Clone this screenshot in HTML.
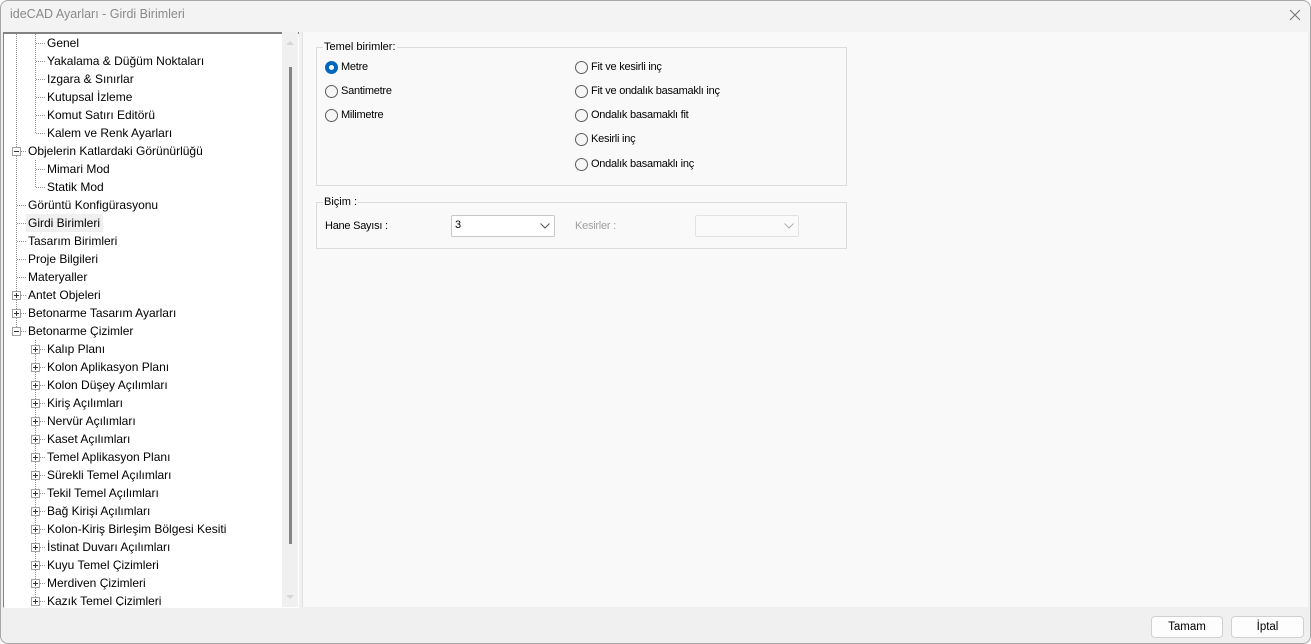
<!DOCTYPE html>
<html><head><meta charset="utf-8"><style>
*{box-sizing:border-box;margin:0;padding:0}
body{width:1311px;height:644px;background:#fff;font-family:"Liberation Sans",sans-serif;overflow:hidden;position:relative}
#win{position:absolute;left:0;top:0;width:1311px;height:644px;background:#f0f0f0;border-radius:8px;overflow:hidden}
#frame{position:absolute;left:0;top:0;width:1311px;height:644px;border:1px solid #a8a8a8;border-radius:8px;pointer-events:none}
#title{position:absolute;left:0;top:0;width:1311px;height:32px;background:#f3f3f3}
#title span{position:absolute;left:10px;top:7px;font-size:12.5px;color:#8a8a8a}
#close{position:absolute;left:1289px;top:9px}
#tree{position:absolute;left:3px;top:32px;width:296px;height:576px;background:#fff;border-left:1px solid #828282;border-top:2px solid #828282;border-bottom:1px solid #fff}
.row{position:absolute;height:18px;line-height:18px;font-size:12px;color:#000;white-space:nowrap}
.vl{position:absolute;border-left:1px dotted #909090;width:0}
.hl{position:absolute;border-top:1px dotted #909090;height:0}
.bx{position:absolute;width:9px;height:9px;border:1px solid #a0a0a0;background:#fff}
.bx:before{content:"";position:absolute;left:1px;top:3px;width:5px;height:1px;background:#333}
.bx.p:after{content:"";position:absolute;left:3px;top:1px;width:1px;height:5px;background:#333}
#sb{position:absolute;left:282px;top:32px;width:16px;height:575px;background:#f0f0f0}
#thumb{position:absolute;left:289px;top:67px;width:3px;height:477px;background:#858585}
#right{position:absolute;left:302px;top:32px;width:1006px;height:575px;background:#f9f9f9;border-left:1px solid #e0e0e0}
.grp{position:absolute;border:1px solid #dcdcdc}
.lg{position:absolute;font-size:11px;background:#f9f9f9;padding:0 1px;color:#000}
.lab{position:absolute;font-size:11px;color:#000;line-height:13px;letter-spacing:-0.25px}
.rd{position:absolute;width:13px;height:13px;border-radius:50%;border:1px solid #5c5c5c;background:#f6f6f6}
.rd.on{border:4px solid #0067c0;background:#fff}
.sel{position:absolute;height:22px;border:1px solid #c8c8c8;background:#fff;border-radius:2px}
.btn{position:absolute;height:22px;border:1px solid #d0d0d0;border-radius:4px;background:#fdfdfd;font-size:11.5px;text-align:center;line-height:20px}
</style></head><body><div id="win">
<div id="title"><span>ideCAD Ayarları - Girdi Birimleri</span>
<svg id="close" width="12" height="12" viewBox="0 0 12 12"><path d="M1 1L11 11M11 1L1 11" stroke="#777" stroke-width="1.1"/></svg></div>
<div id="right"></div>
<div id="tree"></div>
<div id="sb"></div>
<svg style="position:absolute;left:284px;top:38px" width="12" height="8"><path d="M2 7L6 3L10 7Z" fill="#d5d5d5"/></svg>
<svg style="position:absolute;left:284px;top:594px" width="12" height="8"><path d="M2 1L6 5L10 1Z" fill="#d5d5d5"/></svg>
<div id="thumb"></div>

<div class="vl" style="left:16px;top:34px;height:297px"></div>
<div class="vl" style="left:35px;top:34px;height:99px"></div>
<div class="vl" style="left:35px;top:160px;height:27px"></div>
<div class="vl" style="left:35px;top:340px;height:267px"></div>
<div style="position:absolute;left:26px;top:214px;width:77px;height:18px;background:#f0f0f0"></div>

<div class="hl" style="left:36px;top:43px;width:9px"></div><div class="row" style="left:47px;top:34px">Genel</div>
<div class="hl" style="left:36px;top:61px;width:9px"></div><div class="row" style="left:47px;top:52px">Yakalama &amp; Düğüm Noktaları</div>
<div class="hl" style="left:36px;top:79px;width:9px"></div><div class="row" style="left:47px;top:70px">Izgara &amp; Sınırlar</div>
<div class="hl" style="left:36px;top:97px;width:9px"></div><div class="row" style="left:47px;top:88px">Kutupsal İzleme</div>
<div class="hl" style="left:36px;top:115px;width:9px"></div><div class="row" style="left:47px;top:106px">Komut Satırı Editörü</div>
<div class="hl" style="left:36px;top:133px;width:9px"></div><div class="row" style="left:47px;top:124px">Kalem ve Renk Ayarları</div>
<div class="bx" style="left:12px;top:147px"></div><div class="hl" style="left:21px;top:151px;width:5px"></div><div class="row" style="left:28px;top:142px">Objelerin Katlardaki Görünürlüğü</div>
<div class="hl" style="left:36px;top:169px;width:9px"></div><div class="row" style="left:47px;top:160px">Mimari Mod</div>
<div class="hl" style="left:36px;top:187px;width:9px"></div><div class="row" style="left:47px;top:178px">Statik Mod</div>
<div class="hl" style="left:17px;top:205px;width:9px"></div><div class="row" style="left:28px;top:196px">Görüntü Konfigürasyonu</div>
<div class="hl" style="left:17px;top:223px;width:9px"></div><div class="row" style="left:28px;top:214px">Girdi Birimleri</div>
<div class="hl" style="left:17px;top:241px;width:9px"></div><div class="row" style="left:28px;top:232px">Tasarım Birimleri</div>
<div class="hl" style="left:17px;top:259px;width:9px"></div><div class="row" style="left:28px;top:250px">Proje Bilgileri</div>
<div class="hl" style="left:17px;top:277px;width:9px"></div><div class="row" style="left:28px;top:268px">Materyaller</div>
<div class="bx p" style="left:12px;top:291px"></div><div class="hl" style="left:21px;top:295px;width:5px"></div><div class="row" style="left:28px;top:286px">Antet Objeleri</div>
<div class="bx p" style="left:12px;top:309px"></div><div class="hl" style="left:21px;top:313px;width:5px"></div><div class="row" style="left:28px;top:304px">Betonarme Tasarım Ayarları</div>
<div class="bx" style="left:12px;top:327px"></div><div class="hl" style="left:21px;top:331px;width:5px"></div><div class="row" style="left:28px;top:322px">Betonarme Çizimler</div>

<div class="bx p" style="left:31px;top:345px"></div><div class="hl" style="left:40px;top:349px;width:5px"></div><div class="row" style="left:47px;top:340px">Kalıp Planı</div>
<div class="bx p" style="left:31px;top:363px"></div><div class="hl" style="left:40px;top:367px;width:5px"></div><div class="row" style="left:47px;top:358px">Kolon Aplikasyon Planı</div>
<div class="bx p" style="left:31px;top:381px"></div><div class="hl" style="left:40px;top:385px;width:5px"></div><div class="row" style="left:47px;top:376px">Kolon Düşey Açılımları</div>
<div class="bx p" style="left:31px;top:399px"></div><div class="hl" style="left:40px;top:403px;width:5px"></div><div class="row" style="left:47px;top:394px">Kiriş Açılımları</div>
<div class="bx p" style="left:31px;top:417px"></div><div class="hl" style="left:40px;top:421px;width:5px"></div><div class="row" style="left:47px;top:412px">Nervür Açılımları</div>
<div class="bx p" style="left:31px;top:435px"></div><div class="hl" style="left:40px;top:439px;width:5px"></div><div class="row" style="left:47px;top:430px">Kaset Açılımları</div>
<div class="bx p" style="left:31px;top:453px"></div><div class="hl" style="left:40px;top:457px;width:5px"></div><div class="row" style="left:47px;top:448px">Temel Aplikasyon Planı</div>
<div class="bx p" style="left:31px;top:471px"></div><div class="hl" style="left:40px;top:475px;width:5px"></div><div class="row" style="left:47px;top:466px">Sürekli Temel Açılımları</div>
<div class="bx p" style="left:31px;top:489px"></div><div class="hl" style="left:40px;top:493px;width:5px"></div><div class="row" style="left:47px;top:484px">Tekil Temel Açılımları</div>
<div class="bx p" style="left:31px;top:507px"></div><div class="hl" style="left:40px;top:511px;width:5px"></div><div class="row" style="left:47px;top:502px">Bağ Kirişi Açılımları</div>
<div class="bx p" style="left:31px;top:525px"></div><div class="hl" style="left:40px;top:529px;width:5px"></div><div class="row" style="left:47px;top:520px">Kolon-Kiriş Birleşim Bölgesi Kesiti</div>
<div class="bx p" style="left:31px;top:543px"></div><div class="hl" style="left:40px;top:547px;width:5px"></div><div class="row" style="left:47px;top:538px">İstinat Duvarı Açılımları</div>
<div class="bx p" style="left:31px;top:561px"></div><div class="hl" style="left:40px;top:565px;width:5px"></div><div class="row" style="left:47px;top:556px">Kuyu Temel Çizimleri</div>
<div class="bx p" style="left:31px;top:579px"></div><div class="hl" style="left:40px;top:583px;width:5px"></div><div class="row" style="left:47px;top:574px">Merdiven Çizimleri</div>
<div class="bx p" style="left:31px;top:597px"></div><div class="hl" style="left:40px;top:601px;width:5px"></div><div class="row" style="left:47px;top:592px">Kazık Temel Çizimleri</div>
<div style="position:absolute;left:4px;top:606px;width:278px;height:2px;background:#fff"></div>

<div class="grp" style="left:316px;top:47px;width:531px;height:139px"></div>
<div class="lg" style="left:323px;top:41px">Temel birimler:</div>
<div class="rd on" style="left:325px;top:61px"></div><div class="lab" style="left:341px;top:61px">Metre</div>
<div class="rd" style="left:325px;top:85px"></div><div class="lab" style="left:341px;top:85px">Santimetre</div>
<div class="rd" style="left:325px;top:109px"></div><div class="lab" style="left:341px;top:109px">Milimetre</div>
<div class="rd" style="left:575px;top:61px"></div><div class="lab" style="left:591px;top:61px">Fit ve kesirli inç</div>
<div class="rd" style="left:575px;top:85px"></div><div class="lab" style="left:591px;top:85px">Fit ve ondalık basamaklı inç</div>
<div class="rd" style="left:575px;top:109px"></div><div class="lab" style="left:591px;top:109px">Ondalık basamaklı fit</div>
<div class="rd" style="left:575px;top:133px"></div><div class="lab" style="left:591px;top:133px">Kesirli inç</div>
<div class="rd" style="left:575px;top:158px"></div><div class="lab" style="left:591px;top:158px">Ondalık basamaklı inç</div>

<div class="grp" style="left:316px;top:202px;width:531px;height:47px"></div>
<div class="lg" style="left:323px;top:196px">Biçim :</div>
<div class="lab" style="left:325px;top:220px">Hane Sayısı :</div>
<div class="sel" style="left:451px;top:215px;width:104px"><span style="position:absolute;left:3px;top:3px;font-size:11px">3</span>
<svg style="position:absolute;left:88px;top:7px" width="10" height="6"><path d="M0.5 0.5L5 5L9.5 0.5" fill="none" stroke="#555" stroke-width="1"/></svg></div>
<div class="lab" style="left:575px;top:220px;color:#a0a0a0">Kesirler :</div>
<div class="sel" style="left:695px;top:215px;width:104px;border-color:#e2e2e2;background:#fafafa">
<svg style="position:absolute;left:88px;top:7px" width="10" height="6"><path d="M0.5 0.5L5 5L9.5 0.5" fill="none" stroke="#b0b0b0" stroke-width="1"/></svg></div>

<div class="btn" style="left:1151px;top:616px;width:72px">Tamam</div>
<div class="btn" style="left:1231px;top:616px;width:73px">İptal</div>
</div><div id="frame"></div></body></html>
